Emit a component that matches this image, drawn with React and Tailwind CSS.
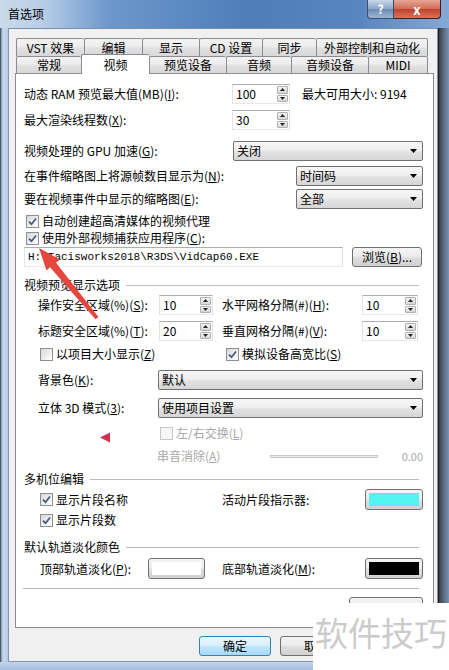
import React from "react";

const FONT = "font-['Noto_Sans_CJK_SC','Noto_Sans',sans-serif]";

function Check({ checked, disabled }) {
  return (
    <span
      className={`inline-flex w-[13px] h-[13px] shrink-0 items-center justify-center border ${
        disabled
          ? "border-[#c8c8c8] bg-[#f6f6f6]"
          : "border-[#8e8f8f] bg-[linear-gradient(135deg,#d8d8d8,#ffffff)]"
      }`}
    >
      {checked && (
        <svg width="9" height="9" viewBox="0 0 9 9">
          <path d="M1 4.6 L3.5 7.2 L8 1.5" fill="none" stroke="#46597d" strokeWidth="1.7" />
        </svg>
      )}
    </span>
  );
}

function Spin({ value, className }) {
  return (
    <div
      className={`flex h-[20px] border border-[#abadb3] border-l-[#e2e3ea] border-r-[#dbdfe6] border-b-[#e3e9ef] bg-white ${className}`}
    >
      <div className="flex-1 pl-[3px] flex items-center">{value}</div>
      <div className="w-[12px] flex flex-col gap-px py-px pr-px">
        <div className="flex-1 flex items-center justify-center rounded-[1px] border border-[#b0b0b0] bg-[linear-gradient(to_bottom,#f4f4f4,#d6d6d6)]">
          <svg width="5" height="3" viewBox="0 0 5 3">
            <path d="M0 3 L2.5 0 L5 3Z" fill="#222" />
          </svg>
        </div>
        <div className="flex-1 flex items-center justify-center rounded-[1px] border border-[#b0b0b0] bg-[linear-gradient(to_bottom,#f4f4f4,#d6d6d6)]">
          <svg width="5" height="3" viewBox="0 0 5 3">
            <path d="M0 0 L5 0 L2.5 3Z" fill="#222" />
          </svg>
        </div>
      </div>
    </div>
  );
}

function Select({ value, className }) {
  return (
    <div
      className={`flex items-center h-[20px] border border-[#707070] rounded-[2px] bg-[linear-gradient(to_bottom,#f7f7f7_0%,#efefef_45%,#e2e2e2_55%,#d6d6d6_100%)] pl-[3px] pr-[5px] ${className}`}
    >
      <span className="flex-1">{value}</span>
      <svg width="7" height="4" viewBox="0 0 7 4">
        <path d="M0 0 H7 L3.5 4Z" fill="#000" />
      </svg>
    </div>
  );
}

function Btn({ children, className }) {
  return (
    <div
      className={`flex items-center justify-center border border-[#707070] rounded-[3px] bg-[linear-gradient(to_bottom,#f4f4f4_0%,#ececec_45%,#dedede_55%,#d0d0d0_100%)] ${className}`}
    >
      {children}
    </div>
  );
}

function ColorBtn({ color, className }) {
  return (
    <Btn className={`p-[3px] ${className}`}>
      <div className={`w-full h-full ${color}`} />
    </Btn>
  );
}

function Heading({ children }) {
  return (
    <div className="flex items-center h-[14px]">
      <span>{children}</span>
      <div className="flex-1 ml-[6px] mr-[4px] h-px bg-[#b8bec6]" />
    </div>
  );
}

function Tab({ label, w, selected, last }) {
  return (
    <div
      className={`${w} flex items-center justify-center border-t border-l ${last ? "border-r" : ""} border-[#898c95] rounded-t-[2px] ${
        selected
          ? "h-[20px] bg-white relative z-10 -mb-px"
          : "h-full bg-[linear-gradient(to_bottom,#f4f4f4_0%,#ececec_45%,#e0e0e0_55%,#d8d8d8_100%)]"
      }`}
    >
      {label}
    </div>
  );
}

export default function App() {
  return (
    <div className={`w-[449px] h-[670px] relative overflow-hidden flex flex-col text-[12px] leading-none text-black ${FONT}`}>
      {/* title bar */}
      <div className="h-[28px] flex bg-[linear-gradient(to_right,#cbdaeb_0%,#b6cce6_10%,#6e98cc_24%,#4e7db9_55%,#5985bf_80%,#86a9d4_100%)]">
        <div className="flex-1 pl-[8px] pt-[8px] text-[12px]">首选项</div>
        <div className="flex items-start mr-[8px]">
          <div className="w-[27px] h-[19px] flex items-center justify-center border border-t-0 border-[#3b4d68] rounded-bl-[4px] bg-[linear-gradient(to_bottom,#c7d7ea,#8aa6c8_50%,#6a8ab2_50%,#9cb7d6)] text-white font-bold text-[12px]">
            ?
          </div>
          <div className="w-[47px] h-[19px] flex items-center justify-center border border-t-0 border-l-0 border-[#3b2020] rounded-br-[4px] bg-[linear-gradient(to_bottom,#e8a494,#d06b55_50%,#c1402a_50%,#d8735c)] text-white font-bold text-[13px]">
            x
          </div>
        </div>
      </div>

      {/* body */}
      <div className="flex h-[634px]">
        <div className="w-[8px] bg-[linear-gradient(to_right,#7d93ae,#c9d8ea_30%,#b6cbe3)] border-l border-[#4b5d74]" />
        <div className="w-[430px] bg-[#f0f0f0] border border-[#8396ae] border-t-[#7890ad] flex flex-col">
          <div className="ml-[6px] mt-[9px] w-[419px] flex flex-col">
            {/* tab row 1 */}
            <div className="flex h-[18px] pl-px">
              <Tab label="VST 效果" w="w-[68px]" />
              <Tab label="编辑" w="w-[58px]" />
              <Tab label="显示" w="w-[57px]" />
              <Tab label="CD 设置" w="w-[63px]" />
              <Tab label="同步" w="w-[54px]" />
              <Tab label="外部控制和自动化" w="w-[112px]" last />
            </div>
            {/* tab row 2 */}
            <div className="flex h-[17px] items-end pl-px">
              <Tab label="常规" w="w-[65px]" />
              <Tab label="视频" w="w-[68px]" selected />
              <Tab label="预览设备" w="w-[77px]" />
              <Tab label="音频" w="w-[65px]" />
              <Tab label="音频设备" w="w-[77px]" />
              <Tab label="MIDI" w="w-[60px]" last />
            </div>

            {/* panel */}
            <div className="h-[555px] border border-[#898c95] bg-white flex flex-col pl-[8px] pr-[10px]">
              <div className="mt-[10px] h-[20px] flex items-center">
                <span className="w-[208px]">
                  动态 RAM 预览最大值(MB)(<u>I</u>):
                </span>
                <Spin value="100" className="w-[58px]" />
                <span className="ml-[12px]">最大可用大小: 9194</span>
              </div>
              <div className="mt-[6px] h-[20px] flex items-center">
                <span className="w-[208px]">
                  最大渲染线程数(<u>X</u>):
                </span>
                <Spin value="30" className="w-[58px]" />
              </div>
              <div className="mt-[11px] h-[20px] flex items-center">
                <span className="w-[209px]">
                  视频处理的 GPU 加速(<u>G</u>):
                </span>
                <Select value="关闭" className="flex-1" />
              </div>
              <div className="mt-[5px] h-[20px] flex items-center">
                <span className="flex-1">
                  在事件缩略图上将源帧数目显示为(<u>N</u>):
                </span>
                <Select value="时间码" className="w-[127px]" />
              </div>
              <div className="mt-[3px] h-[20px] flex items-center">
                <span className="flex-1">
                  要在视频事件中显示的缩略图(<u>E</u>):
                </span>
                <Select value="全部" className="w-[127px]" />
              </div>
              <div className="mt-[5px] h-[14px] flex items-center gap-[3px] pl-[2px]">
                <Check checked />
                <span>自动创建超高清媒体的视频代理</span>
              </div>
              <div className="mt-[3px] h-[14px] flex items-center gap-[3px] pl-[2px]">
                <Check checked />
                <span>
                  使用外部视频捕获应用程序(<u>C</u>):
                </span>
              </div>
              <div className="mt-[2px] h-[20px] flex items-center">
                <div className="w-[319px] h-[20px] flex items-center pl-[3px] border border-[#abadb3] border-l-[#e2e3ea] border-r-[#dbdfe6] border-b-[#e3e9ef] bg-white font-['Liberation_Mono',monospace] text-[11px]">
                  {"H:\\Tacisworks2018\\R3DS\\VidCap60.EXE"}
                </div>
                <Btn className="ml-[9px] w-[70px] h-[20px]">
                  浏览(<u>B</u>)...
                </Btn>
              </div>
              <div className="mt-[11px]">
                <Heading>视频预览显示选项</Heading>
              </div>
              <div className="mt-[3px] h-[20px] flex items-center pl-[14px]">
                <span className="w-[121px]">
                  操作安全区域(%)(<u>S</u>):
                </span>
                <Spin value="10" className="w-[54px]" />
                <span className="ml-[9px] w-[140px]">
                  水平网格分隔(#)(<u>H</u>):
                </span>
                <Spin value="10" className="w-[56px]" />
              </div>
              <div className="mt-[6px] h-[20px] flex items-center pl-[14px]">
                <span className="w-[121px]">
                  标题安全区域(%)(<u>T</u>):
                </span>
                <Spin value="20" className="w-[54px]" />
                <span className="ml-[9px] w-[140px]">
                  垂直网格分隔(#)(<u>V</u>):
                </span>
                <Spin value="10" className="w-[56px]" />
              </div>
              <div className="mt-[6px] h-[14px] flex items-center pl-[16px]">
                <div className="w-[186px] flex items-center gap-[3px]">
                  <Check />
                  <span>
                    以项目大小显示(<u>Z</u>)
                  </span>
                </div>
                <div className="flex items-center gap-[3px]">
                  <Check checked />
                  <span>
                    模拟设备高宽比(<u>S</u>)
                  </span>
                </div>
              </div>
              <div className="mt-[9px] h-[20px] flex items-center pl-[14px]">
                <span className="w-[120px]">
                  背景色(<u>K</u>):
                </span>
                <Select value="默认" className="flex-1" />
              </div>
              <div className="mt-[8px] h-[20px] flex items-center pl-[14px]">
                <span className="w-[120px]">
                  立体 3D 模式(<u>3</u>):
                </span>
                <Select value="使用项目设置" className="flex-1" />
              </div>
              <div className="mt-[8px] h-[14px] flex items-center gap-[3px] pl-[136px] text-[#a8a8a8]">
                <Check disabled />
                <span>
                  左/右交换(<u>L</u>)
                </span>
              </div>
              <div className="mt-[9px] h-[14px] flex items-center pl-[133px] text-[#a8a8a8]">
                <span className="w-[116px]">
                  串音消除(<u>A</u>)
                </span>
                <div className="w-[110px] h-[3px] border border-[#c8c8c8] bg-[#ececec]" />
                <span className="ml-[24px] text-[11px]">0.00</span>
              </div>
              <div className="mt-[9px]">
                <Heading>多机位编辑</Heading>
              </div>
              <div className="mt-[3px] h-[21px] flex items-center pl-[16px]">
                <div className="w-[182px] flex items-center gap-[3px]">
                  <Check checked />
                  <span>显示片段名称</span>
                </div>
                <span className="flex-1">活动片段指示器:</span>
                <ColorBtn color="bg-[#55f2f2]" className="w-[58px] h-[21px]" />
              </div>
              <div className="mt-[3px] h-[14px] flex items-center gap-[3px] pl-[16px]">
                <Check checked />
                <span>显示片段数</span>
              </div>
              <div className="mt-[13px]">
                <Heading>默认轨道淡化颜色</Heading>
              </div>
              <div className="mt-[4px] h-[21px] flex items-center pl-[16px]">
                <span className="w-[108px]">
                  顶部轨道淡化(<u>P</u>):
                </span>
                <ColorBtn color="bg-white" className="w-[57px] h-[21px]" />
                <span className="ml-[17px] flex-1">
                  底部轨道淡化(<u>M</u>):
                </span>
                <ColorBtn color="bg-black" className="w-[58px] h-[21px]" />
              </div>
              <div className="mt-[9px] h-px bg-[#b8bec6] -ml-px mr-[4px]" />
              <div className="mt-[8px] flex justify-end">
                <Btn className="w-[74px] h-[22px]" />
              </div>
            </div>
          </div>

          {/* dialog buttons */}
          <div className="mt-[8px] flex pl-[190px]">
            <div className="w-[72px] h-[20px] flex items-center justify-center rounded-[3px] border border-[#3c7fb1] bg-[linear-gradient(to_bottom,#eaf6fd_0%,#d9f0fc_45%,#bee6fd_55%,#a7d9f5_100%)]">
              确定
            </div>
            <div className="ml-[9px] w-[33px] h-[20px] overflow-hidden">
              <Btn className="w-[72px] h-[20px] justify-start pl-[23px]">取消</Btn>
            </div>
          </div>
        </div>
        <div className="w-[11px] border-l border-[#1b1b1b] bg-[linear-gradient(to_right,#3a3f47,#5b6d84_50%,#7b93b2)]" />
      </div>
      <div className="h-[8px] bg-[linear-gradient(to_bottom,#c2d5ea,#a3bedf)]" />

      {/* red annotation arrow */}
      <svg className="absolute left-[28px] top-[240px]" width="80" height="86" viewBox="0 0 80 86">
        <polygon
          points="11,8 32,19.5 28,22.7 70.5,77 67.5,79.2 22,27.3 18.5,30.5"
          fill="#e5473f"
        />
      </svg>
      <svg className="absolute left-[99px] top-[432px]" width="12" height="11" viewBox="0 0 12 11">
        <polygon points="1,5.5 11,0.5 11,10.5" fill="#d2304c" />
      </svg>

      {/* watermark */}
      <div className="absolute left-[313px] top-[603px] w-[136px] h-[67px] bg-white pl-[2px] pt-[13px]">
        <span className="text-[33px] leading-none text-[#cbcbcb]">软件技巧</span>
      </div>
    </div>
  );
}
